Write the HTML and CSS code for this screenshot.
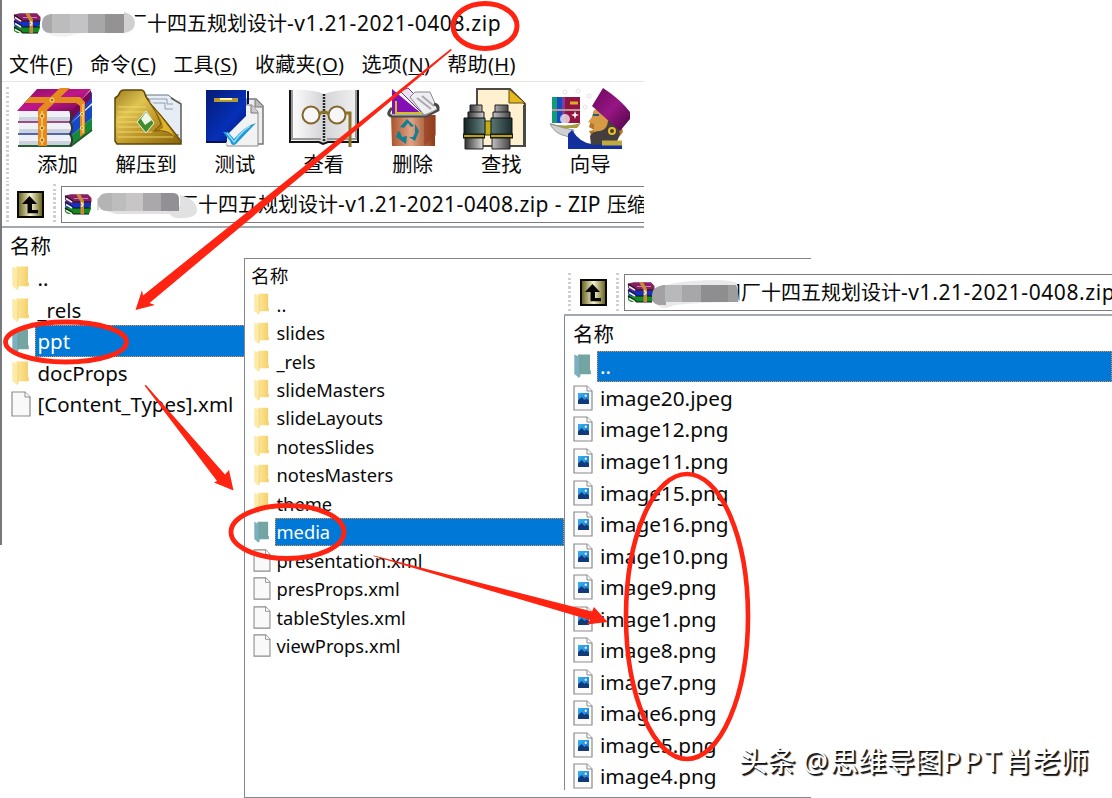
FILE: index.html
```html
<!DOCTYPE html>
<html lang="zh-CN">
<head>
<meta charset="utf-8">
<title>WinRAR</title>
<link rel="stylesheet" href="styles.css">
</head>
<body>
<svg class="defs" width="0" height="0">
  <defs>
    <linearGradient id="gFold" x1="0" x2="1"><stop offset="0" stop-color="#ffe79b"/><stop offset="1" stop-color="#f3cf68"/></linearGradient>
    <linearGradient id="gGold" x1="0" y1="0" x2="1" y2="1"><stop offset="0" stop-color="#9c7c20"/><stop offset=".3" stop-color="#e0c450"/><stop offset=".55" stop-color="#c09c2c"/><stop offset="1" stop-color="#8a6508"/></linearGradient>
    <linearGradient id="gPurple" x1="0" y1="0" x2="1" y2="1"><stop offset="0" stop-color="#8b0a62"/><stop offset=".5" stop-color="#c0168c"/><stop offset="1" stop-color="#6e0648"/></linearGradient>
    <linearGradient id="gBlue" x1="0" x2="1" y1="0" y2="1"><stop offset="0" stop-color="#051b74"/><stop offset=".6" stop-color="#0630b8"/><stop offset="1" stop-color="#001472"/></linearGradient>
    <linearGradient id="gMetal" x1="0" x2="1"><stop offset="0" stop-color="#333"/><stop offset=".45" stop-color="#eee"/><stop offset="1" stop-color="#444"/></linearGradient>
    <linearGradient id="gLens" x1="0" x2="1"><stop offset="0" stop-color="#142424"/><stop offset=".45" stop-color="#6b8988"/><stop offset="1" stop-color="#1b2c2c"/></linearGradient>
    <linearGradient id="gBin" x1="0" x2="1"><stop offset="0" stop-color="#a9532c"/><stop offset=".45" stop-color="#e0a385"/><stop offset="1" stop-color="#8e3a14"/></linearGradient>
    <linearGradient id="gPage" x1="0" x2="1"><stop offset="0" stop-color="#fff"/><stop offset=".5" stop-color="#d4d4d8"/><stop offset="1" stop-color="#f2f2f2"/></linearGradient>
    <linearGradient id="gUp" x1="0" y1="0" x2="1" y2="0"><stop offset="0" stop-color="#6a6522"/><stop offset=".5" stop-color="#f6f3cf"/><stop offset="1" stop-color="#6a6522"/></linearGradient>
    <linearGradient id="gImg" x1="0" y1="0" x2="1" y2="1"><stop offset="0" stop-color="#35b4f2"/><stop offset="1" stop-color="#1b6fd0"/></linearGradient>
    <linearGradient id="gHat" x1="0" y1="0" x2="1" y2="1"><stop offset="0" stop-color="#650a58"/><stop offset=".5" stop-color="#981585"/><stop offset="1" stop-color="#4a0740"/></linearGradient>

    <symbol id="folder" viewBox="0 0 17 24">
      <path d="M4 .5h12v15.7l.8.4v3.6H5z" fill="url(#gFold)"/>
      <path d="M.3.5 6 3v19.500l-1.500 1L.3 20z" fill="#fdeaa9"/>
      <path d="M6 3v19.500l-1.500 1" fill="none" stroke="#ecc95f" stroke-width=".6"/>
    </symbol>
    <symbol id="folderSel" viewBox="0 0 17 24">
      <path d="M4 .5h12v15.7l.8.4v3.6H5z" fill="#73a5a2"/>
      <path d="M.3.5 6 3v19.500l-1.500 1L.3 20z" fill="#7db0bf"/>
      <path d="M6 3v19.500l-1.500 1" fill="none" stroke="#679895" stroke-width=".6"/>
    </symbol>
    <symbol id="file" viewBox="0 0 20 26">
      <path d="M1 1h13l5 5v19H1z" fill="#f9f9f9" stroke="#8b8b8b" stroke-width="1.200"/>
      <path d="M14 1v5h5" fill="#fff" stroke="#8b8b8b"/>
    </symbol>
    <symbol id="image" viewBox="0 0 20 26">
      <path d="M1 1h13l5 5v19H1z" fill="#fbfbfb" stroke="#8b8b8b" stroke-width="1.200"/>
      <path d="M14 1v5h5" fill="#fff" stroke="#8b8b8b"/>
      <rect x="5" y="8" width="11" height="11" fill="url(#gImg)"/>
      <path d="M5 15.500 8.500 12l3 3 2-1.500 2.500 2V19H5z" fill="#123a78"/>
      <circle cx="12.800" cy="10.800" r="1.200" fill="#d7f3ff"/>
    </symbol>
    <symbol id="up" viewBox="0 0 27 27">
      <rect width="27" height="27" fill="#070707"/>
      <rect x="2" y="2" width="23" height="23" fill="url(#gUp)"/>
      <path d="M12.500 5 20 13h-5v6h6v3.200H10.500V13H5z" fill="#050505"/>
    </symbol>
    <symbol id="rar" viewBox="0 0 28 21">
      <path d="M1 13 6 9h21v6l-2 5H4l-3-2z" fill="#168a22"/>
      <path d="M1 7.500 6 5h21v6l-3 3H4l-3-2z" fill="#1030c8"/>
      <path d="M1 1.500 7 .3h17L27.500 4v4L25 9H5L1 6z" fill="#842063"/>
      <path d="M1 2 9 7M1 8l8 5M1 14l8 5" stroke="#161616" stroke-width="1.300"/>
      <path d="M2 4.500 8 8.200M2 10.500l6 3.500M2 16.500l6 3.200" stroke="#eee" stroke-width="1.500"/>
      <path d="M9 8h18M9 14h17M9 20h16" stroke="#111"/>
      <path d="M10 4.500h14" stroke="#d37bb3"/>
      <path d="M12 0h4l4 7v13h-3.500V8z" fill="#c98b3b"/>
      <path d="M17 8.500q4 2 0 4" fill="none" stroke="#f2e9be" stroke-width="1.500"/>
    </symbol>
  </defs>
</svg>

<main class="canvas">
  <section class="win win-main">
    <header class="titlebar">
      <svg class="rar"><use href="#rar"/></svg>
      <span class="caption title-cap"><span class="t">厂十四五规划设计<span class="lat">-v1.21-2021-0408.zip</span></span>
        <svg class="mask" width="110" height="30" viewBox="0 0 110 30">
          <path d="M0 12Q2 2 12 2L85 0Q96 1 95 14 95 23 86 23L106 22V27Q60 22 30 27 4 30 0 18z" fill="#fff"/>
          <path d="M2 18Q50 20 88 19L86 23Q45 20 25 27 5 27 2 18z" fill="#f2f2f3"/>
          <path d="M10 4H26V23H10Q0 23 1 13 1 5 10 4z" fill="#a9a9ac"/><path d="M11 4h18v19H11z" fill="#bdbcbd"/><path d="M29 4h18v19H29z" fill="#c3c3c5"/><path d="M47 4h18v19H47z" fill="#a7a6a8"/><path d="M64 4h19v19H64z" fill="#949293"/><path d="M83 2Q94 5 94 13 94 21 83 23z" fill="#d0d0d0"/>
        </svg>
      </span>
    </header>
    <nav class="menubar">
      <span>文件(<u>F</u>)</span><span>命令(<u>C</u>)</span><span>工具(<u>S</u>)</span><span>收藏夹(<u>O</u>)</span><span>选项(<u>N</u>)</span><span>帮助(<u>H</u>)</span>
    </nav>
    <div class="toolbar">
      <i class="grip"></i>
      <div class="tool"><svg class="add" viewBox="0 0 76 60" width="76" height="60">
        <path d="M54 23 75 4v11L54 35z" fill="#213fc5"/><path d="M54 35 75 17v13L54 48z" fill="#1449c8"/><path d="M54 48 75 30v12L54 58z" fill="#128a38"/>
        <path d="M53 23 74 2v8L53 33z" fill="#7a0753"/>
        <path d="M2 22h51v12H2zM2 35h51v11H2zM2 47h51v10H2z" fill="#f0f1f6"/>
        <path d="M2 29h51v4H2zM2 41h51v4H2zM2 53h51v4H2z" fill="#cdd2df"/>
        <path d="M1 34h53" stroke="#7d1258" stroke-width="1.500"/><path d="M1 46h53" stroke="#17378d" stroke-width="1.500"/><path d="M1 58h53L75 42" stroke="#25612e" stroke-width="2" fill="none"/>
        <path d="M53 23q4 7 0 11 4 6 0 12 4 6 0 12" stroke="#333" stroke-width="2" fill="none"/>
        <path d="M20 1h54L54 23H0z" fill="url(#gPurple)"/>
        <path d="M43 0h10L30 22v36h-9V21z" fill="#e48a1e"/><path d="M13 9h50l5 5v31l-5 4V18l-4-3H7z" fill="#e48a1e"/>
        <path d="M25 23v34M66 16v29" stroke="#f9ba57" stroke-width="2"/><g fill="#aa651b" stroke="#fff18f"><circle cx="35" cy="12" r="2"/><circle cx="25" cy="28" r="2"/><circle cx="25" cy="40" r="2"/><circle cx="25" cy="52" r="2"/><circle cx="65" cy="26" r="1.500"/><circle cx="65" cy="40" r="1.500"/></g>
      </svg><span>添加</span></div>
      <div class="tool"><svg class="extract" viewBox="0 0 70 60" width="70" height="60">
        <path d="M33 7h22l11 8v32H33z" fill="#e7edf4" stroke="#69747f"/><path d="M34 11h20v5h6M34 15h18v6h8" fill="none" stroke="#8e9bab"/>
        <path d="M2 10Q6 8 7 4 8 2 11 2H28q3 0 4 4 1 4 3 5l33 42v3H4l-2-3z" fill="url(#gGold)" stroke="#5d450a" stroke-width="1.500"/>
        <path d="M34 11 68 49V12h-3v28L50 22z" fill="#e7edf4"/>
        <path d="M34 11Q44 24 48 36l-7 7q14-3 27 10Z" fill="#a87b12" stroke="#76560c"/><path d="M42 22q8 11 8 18l-4 2q10 0 16 7-8-14-20-27z" fill="#dfb52e"/>
        <path d="M58 10l10 6v38" fill="none" stroke="#5d5a50" stroke-width="1.500"/><path d="M5 19h28M5 24h27M5 29h20M5 34h20M5 39h22M5 44h34M5 49h55" stroke="#f4da78" stroke-width="1.500" opacity=".6"/>
        <path d="M24 34 33 23l8 12-8 10z" fill="#3f8e29" stroke="#eee"/><path d="M28 31l5-7 6 8-7 5z" fill="#eef6e8"/>
      </svg><span>解压到</span></div>
      <div class="tool"><svg viewBox="0 0 60 60" width="60" height="60">
        <path d="M42 11h9l7 7v38H42z" fill="#eee" stroke="#777" stroke-width="1.500"/><path d="M50 11v8h8" fill="#bbb" stroke="#777"/>
        <path d="M22 17h25l6 7v34H22z" fill="#f2f2f2" stroke="#888"/><path d="M46 17v8h7" fill="#ccc" stroke="#777"/>
        <path d="M1 2h40v52H1z" fill="url(#gBlue)"/><path d="M1 54h20M43 3v13" stroke="#07115b" stroke-width="2"/>
        <path d="M22 47 42 27V57H22z" fill="#f2f2f2"/><path d="M9 12h24" stroke="#b39b33" stroke-width="4"/><path d="M15 11h12" stroke="#fff5ab" stroke-width="2"/>
        <path d="M18 44h5l6 7Q40 38 51 35L31 56q-4 3-6-3z" fill="#1e99d8"/><path d="M22 45l7 9q8-11 16-16" fill="none" stroke="#8cdafc" stroke-width="1.500"/>
      </svg><span>测试</span></div>
      <div class="tool"><svg viewBox="0 0 70 60" width="70" height="60">
        <path d="M1 2q22-1 34 4Q50 1 69 2v52H38l-3 3-5-3H1z" fill="url(#gPage)"/><path d="M1 2v52h29l4 2 5-2h30V2" fill="none" stroke="#141414" stroke-width="2"/><path d="M3 2v49h29M67 2v49H38" fill="none" stroke="#999" stroke-width="2"/>
        <path d="M35 6v48" stroke="#252525" stroke-width="2.500" stroke-dasharray="2 1"/><circle cx="22" cy="27" r="8.500" fill="#f7f7f7" stroke="#83672b" stroke-width="2"/><circle cx="48" cy="27" r="8.500" fill="#f7f7f7" stroke="#83672b" stroke-width="2"/><path d="M30 26q5-4 10 0M56 25h5v34" fill="none" stroke="#8c7326" stroke-width="3"/>
      </svg><span>查看</span></div>
      <div class="tool"><svg class="bin" viewBox="0 0 52 60" width="52" height="60">
        <path d="M4 1 34 26H4z" fill="#8410b5"/><path d="M12 3l8-3 24 24-7 4z" fill="#e9e1ef" stroke="#7b2d92"/><path d="M27 4h15l8 18-14 5-14-18z" fill="#eeeef2" stroke="#888"/><path d="M29 10l14 11M34 8l12 10" stroke="#aaa" stroke-width="2"/>
        <path d="M8 13v12h26" fill="none" stroke="#cebf2b" stroke-width="2"/><path d="M3 27h44v31H4z" fill="url(#gBin)"/><path d="M36 27h12v20L36 58z" fill="#943e20" opacity=".6"/>
        <path d="M4 20q-6 6-1 8h35l12-6q1-5-4-6" fill="none" stroke="#494949" stroke-width="3"/><path d="M4 27h34l11-6" fill="none" stroke="#b9b9b9"/>
        <g fill="#128090"><path d="m12 39 7-8 7 7-3 1-3-4-4 5z"/><path d="m27 36 4 7-4 10-6-4h4l2-4z"/><path d="m10 43 2 1 2 5 5-1-1 8-7-5-3-2z"/></g>
      </svg><span>删除</span></div>
      <div class="tool"><svg class="find" viewBox="0 0 64 62" width="64" height="62">
        <path d="M14 1h33l15 15v42H14z" fill="#fff1cf" stroke="#4c4a43" stroke-width="2"/><path d="M46 1v14h16z" fill="#e5ba1c" stroke="#5c4a13"/><path d="M61 17v41H42" fill="none" stroke="#47484a" stroke-width="2"/>
        <path d="M20 33h12v14H20z" fill="#c1ae12" stroke="#3c390a"/><path d="M7 17h12v8H7zM32 17h13v8H32z" fill="url(#gMetal)" stroke="#222"/>
        <path d="M5 24h16v9H5zM30 24h17v9H30z" fill="url(#gMetal)" stroke="#171717"/><path d="M1 30h21v17H1zM28 30h21v17H28z" fill="url(#gLens)" stroke="#111"/><path d="M2 49h18v12H2zM29 49h18v12H29z" fill="url(#gMetal)" stroke="#222"/><path d="M0 48h22M27 48h23" stroke="#1b1b0d" stroke-width="5"/><path d="M1 48h20M28 48h21" stroke="#b3a315" stroke-width="2"/>
      </svg><span>查找</span></div>
      <div class="tool"><svg class="wiz" viewBox="0 0 84 62" width="84" height="62">
        <path d="M4 9h28v26H4z" fill="#941441"/><path d="M4 9h5v26H4z" fill="#119b78"/><path d="M9 9h5v26H9z" fill="#174ac5"/><path d="M14 9h3v26h-3z" fill="#7c3f9c"/><path d="M4 22h28" stroke="#bd989c" stroke-width="2"/><path d="M22 15h8" stroke="#dbad29" stroke-width="3"/><circle cx="17" cy="31" r="5" fill="#fff" opacity=".7"/><path d="m27 23 1 3 3 1-3 1-1 3-1-3-3-1 3-1z" fill="#fff"/>
        <path d="M2 35q13 5 31 0l-4 5H6z" fill="#a99a3e"/><path d="M2 36q5 10 16 12l6 2 2-8-10-2z" fill="#d0d0d3" stroke="#999"/>
        <path d="M20 61V46l4-4q8 13 20 14h30v5z" fill="#112f9d"/><path d="M46 22h23l6 22-8 10-22-3-4-8 5-1-5-3z" fill="#b17825"/><path d="M46 22v5l-6 7 6 2v8q10 4 14-11l-4-13z" fill="#d79b48"/>
        <path d="M42 48q3-5 10-5 8-2 8-10h8l4 13-4 10-25 1z" fill="#453e3e"/><path d="M45 27h6" stroke="#235d82" stroke-width="2"/><path d="M55 0q17 11 27 24v7L72 43 44 18z" fill="url(#gHat)"/>
        <circle cx="64" cy="43" r="3" fill="none" stroke="#e9bf28" stroke-width="2"/><path d="M54 55h20" fill="none" stroke="#c0aa3f" stroke-width="5"/><g fill="none" stroke="#e2e2e2"><circle cx="17" cy="4" r="2"/><circle cx="30" cy="3" r="2"/><circle cx="41" cy="8" r="2"/><circle cx="37" cy="19" r="2"/></g>
      </svg><span>向导</span></div>
    </div>
    <div class="address">
      <i class="grip"></i><svg class="up"><use href="#up"/></svg><i class="grip"></i>
      <div class="field"><svg class="rar"><use href="#rar"/></svg>
        <span class="caption addr-cap"><span class="t">厂十四五规划设计<span class="lat">-v1.21-2021-0408.zip - ZIP </span>压缩</span>
          <svg class="mask" width="110" height="32" viewBox="0 0 110 32">
            <path d="M5 3h80V20h12V14h6v15H20L6 25z" fill="#fff"/>
            <path d="M4 20Q50 24 84 17V6Q101 10 101 22 100 29 88 29 75 30 74 25L20 25z" fill="#e1e1e1"/>
            <path d="M12 4h16v18H12Q2 22 2 13T12 4z" fill="#b5b4b5"/><path d="M16 4h14v18H16z" fill="#bdbdbe"/><path d="M30 4h17v18H30z" fill="#c7c5c5"/><path d="M47 4h18v18H47z" fill="#aaa8aa"/><path d="M65 4h12q6 0 6 6v12H65z" fill="#929094"/><path d="M2 9v12" stroke="#aaa"/>
          </svg>
        </span>
      </div>
    </div>
    <div class="list list-a">
      <div class="head">名称</div>
      <div class="row"><svg><use href="#folder"/></svg><span class="name">..</span></div>
      <div class="row"><svg><use href="#folder"/></svg><span class="name">_rels</span></div>
      <div class="row sel"><svg><use href="#folderSel"/></svg><span class="name">ppt</span></div>
      <div class="row"><svg><use href="#folder"/></svg><span class="name">docProps</span></div>
      <div class="row doc"><svg><use href="#file"/></svg><span class="name">[Content_Types].xml</span></div>
    </div>
  </section>

  <section class="win win-ppt">
    <div class="list list-b">
      <div class="head">名称</div>
      <div class="row"><svg><use href="#folder"/></svg><span class="name">..</span></div>
      <div class="row"><svg><use href="#folder"/></svg><span class="name">slides</span></div>
      <div class="row"><svg><use href="#folder"/></svg><span class="name">_rels</span></div>
      <div class="row"><svg><use href="#folder"/></svg><span class="name">slideMasters</span></div>
      <div class="row"><svg><use href="#folder"/></svg><span class="name">slideLayouts</span></div>
      <div class="row"><svg><use href="#folder"/></svg><span class="name">notesSlides</span></div>
      <div class="row"><svg><use href="#folder"/></svg><span class="name">notesMasters</span></div>
      <div class="row"><svg><use href="#folder"/></svg><span class="name">theme</span></div>
      <div class="row sel"><svg><use href="#folderSel"/></svg><span class="name">media</span></div>
      <div class="row doc"><svg><use href="#file"/></svg><span class="name">presentation.xml</span></div>
      <div class="row doc"><svg><use href="#file"/></svg><span class="name">presProps.xml</span></div>
      <div class="row doc"><svg><use href="#file"/></svg><span class="name">tableStyles.xml</span></div>
      <div class="row doc"><svg><use href="#file"/></svg><span class="name">viewProps.xml</span></div>
    </div>
  </section>

  <section class="win win-media">
    <div class="address">
      <i class="grip"></i><svg class="up"><use href="#up"/></svg><i class="grip"></i>
      <div class="field"><svg class="rar"><use href="#rar"/></svg>
        <span class="caption media-cap"><span class="t">四厂十四五规划设计<span class="lat">-v1.21-2021-0408.zip</span></span>
          <svg class="mask" width="110" height="32" viewBox="0 0 110 32">
            <path d="M2 17Q3 6 40 3T86 5L88 24Q50 24 24 27 10 34 4 24z" fill="#e9e9e9"/>
            <path d="M12 7h3v20H8Q0 26 1 17 1 9 12 7z" fill="#a3a1a4"/><path d="M14 7h17v17H14z" fill="#b7b9bb"/><path d="M31 7h19v17H31z" fill="#a7a7aa"/><path d="M50 7h27v17H50z" fill="#8e8d8f"/><path d="M77 7h8l2 5v12H77z" fill="#9f9c9d"/>
          </svg>
        </span>
      </div>
    </div>
    <div class="list list-c">
      <div class="head">名称</div>
      <div class="row sel"><svg><use href="#folderSel"/></svg><span class="name">..</span></div>
      <div class="row doc"><svg><use href="#image"/></svg><span class="name">image20.jpeg</span></div>
      <div class="row doc"><svg><use href="#image"/></svg><span class="name">image12.png</span></div>
      <div class="row doc"><svg><use href="#image"/></svg><span class="name">image11.png</span></div>
      <div class="row doc"><svg><use href="#image"/></svg><span class="name">image15.png</span></div>
      <div class="row doc"><svg><use href="#image"/></svg><span class="name">image16.png</span></div>
      <div class="row doc"><svg><use href="#image"/></svg><span class="name">image10.png</span></div>
      <div class="row doc"><svg><use href="#image"/></svg><span class="name">image9.png</span></div>
      <div class="row doc"><svg><use href="#image"/></svg><span class="name">image1.png</span></div>
      <div class="row doc"><svg><use href="#image"/></svg><span class="name">image8.png</span></div>
      <div class="row doc"><svg><use href="#image"/></svg><span class="name">image7.png</span></div>
      <div class="row doc"><svg><use href="#image"/></svg><span class="name">image6.png</span></div>
      <div class="row doc"><svg><use href="#image"/></svg><span class="name">image5.png</span></div>
      <div class="row doc"><svg><use href="#image"/></svg><span class="name">image4.png</span></div>
    </div>
  </section>

  <svg class="marks" viewBox="0 0 1112 798" width="1112" height="798">
    <g fill="none" stroke="#ff2312">
      <ellipse cx="485" cy="26" rx="32" ry="22.500" stroke-width="5"/>
      <ellipse cx="66" cy="342" rx="60.500" ry="20" stroke-width="4.800"/>
      <ellipse cx="287.500" cy="532" rx="56.500" ry="26.500" stroke-width="4.800"/>
      <ellipse cx="687" cy="616.500" rx="61" ry="142.500" stroke-width="4.600"/>
    </g>
    <g fill="#ff2312">
      <path d="M450.500 49 143 295.500 142 290 135.500 310 155 305 149.500 303 452 50z"/>
      <path d="M144.500 385.500 217 481 214 482.500 233.500 490.500 229 470 225 474.500 146 385z"/>
      <path d="M373 556 590 620 587 624.500 607.500 622 594 607 592 611.500 374 555.500z"/>
    </g>
  </svg>
  <div class="watermark">头条 <span class="at">@</span>思维导图<span class="ppt">PPT</span>肖老师</div>
</main>
</body>
</html>
```

FILE: styles.css
```css
* { box-sizing: border-box; }
body { margin: 0; background: #fff; color: #0a0a0a; font-family: "Noto Sans", "Noto Sans CJK SC", sans-serif; font-size: 20px; }
svg { display: block; flex: none; overflow: visible; }
.defs { position: absolute; }
.canvas { position: relative; width: 1112px; height: 798px; overflow: hidden; }
.win { position: absolute; background: #fff; overflow: hidden; white-space: nowrap; }
.win-main { left: 0; top: 0; width: 644px; height: 545px; border-left: 2px solid #77777c; }
.win-ppt { left: 244px; top: 258px; width: 567px; height: 540px; border: solid #84868d; border-width: 1px 0 1px 1px; }
.win-media { left: 564px; top: 271px; width: 548px; height: 519px; }

.titlebar { display: flex; align-items: center; height: 47px; padding-left: 11px; }
.rar { width: 28px; height: 21px; }
.caption { position: relative; line-height: 30px; }
.caption .t { display: block; }
.mask { position: absolute; left: 0; top: 0; }
.title-cap { padding-left: 86px; }
.title-cap .mask { top: 1px; }
.lat { font-size: 21px; letter-spacing: 0.580px; line-height: 1; }

.menubar { display: flex; gap: 17px; height: 35px; padding: 3px 0 0 7px; line-height: 30px; border-bottom: 1px solid #e5e5e5; }
.menubar span { letter-spacing: 0.320px; }
.menubar u { text-underline-offset: 2px; text-decoration-thickness: 1px; }

.toolbar { display: flex; height: 100px; padding: 5px 0 0 4px; }
.grip { width: 3px; flex: none; background: repeating-linear-gradient(#cfcfcf 0 2px, #fff 2px 4.500px); }
.toolbar .grip { margin: 0 4px 0 0; height: 95px; }
.tool { display: flex; flex-direction: column; align-items: center; width: 88.800px; padding-top: 1px; font-size: 20.400px; line-height: 29px; }
.tool svg { margin-bottom: 2px; }
.tool .add { margin-right: 4px; }
.tool .extract { margin-left: 4px; }
.tool .bin { margin-left: 2px; }
.tool .find { margin: 0 13px 0 0; }
.tool .wiz { margin: 0; }

.address { display: flex; align-items: center; height: 46px; border-bottom: 2px solid #a4a8b0; padding: 0 0 0 4px; }
.address .grip { height: 40px; }
.up { width: 27px; height: 27px; margin: 0 9px 0 8px; }
.field { display: flex; align-items: center; flex: 1; min-width: 0; height: 37px; margin-left: 5px; padding-left: 2px; border: 1px solid #7b7b80; border-right: 0; overflow: hidden; }
.addr-cap { top: 1px; padding-left: 86px; }
.addr-cap .mask { left: 4px; top: -1px; }
.addr-cap .lat { letter-spacing: 0.420px; }

.row { display: flex; align-items: center; }
.row svg { width: 17px; height: 24px; }
.row.doc svg { width: 20px; height: 26px; }
.name { display: flex; align-items: center; flex: 1; align-self: stretch; padding-left: 3px; }
.sel .name { background: #0078d7; color: #fff; outline: 1px dotted #e8924a; outline-offset: -1px; }

.list-a { padding-left: 8px; }
.list-a .head { height: 34.200px; line-height: 37px; font-size: 20.500px; }
.list-a .row { height: 31.600px; font-size: 20.500px; }
.list-a .row svg { margin: 0 5.500px 0 2px; }
.list-a .doc svg { margin: 0 3.500px 0 1px; }

.list-b { width: 319px; padding-left: 6px; font-size: 18.300px; }
.list-b .head { height: 31px; line-height: 33px; font-size: 18.700px; }
.list-b .row { height: 28.450px; }
.list-b .row svg { width: 15px; height: 22px; margin: 0 6px 0 2.500px; }
.list-b .row.doc svg { width: 18px; height: 23px; margin: 0 4px 0 1.500px; }
.list-b .name { padding-left: 2px; }

.win-media .address { height: 45px; padding-left: 4px; }
.win-media .up { margin-left: 9px; }
.media-cap { padding-left: 66px; }
.media-cap .mask { left: -4px; }
.list-c { height: 474px; border-left: 1px solid #84868d; padding-left: 8px; }
.list-c .head { height: 34.600px; line-height: 37px; font-size: 20.500px; }
.list-c .row { height: 31.550px; font-size: 20.750px; }
.list-c .row svg { margin: 0 6px 0 1px; }
.list-c .doc svg { margin: 0 4px 0 0; }

.marks { position: absolute; left: 0; top: 0; }
.watermark { position: absolute; left: 739px; top: 741px; font-size: 28.200px; line-height: 40px; white-space: nowrap; color: #fff; text-shadow: 1px 1px 0 #111, 2px 2px 1px #222; }
.watermark .at { letter-spacing: 2px; }
.watermark .ppt { font-size: 29.500px; letter-spacing: 3px; }
```
